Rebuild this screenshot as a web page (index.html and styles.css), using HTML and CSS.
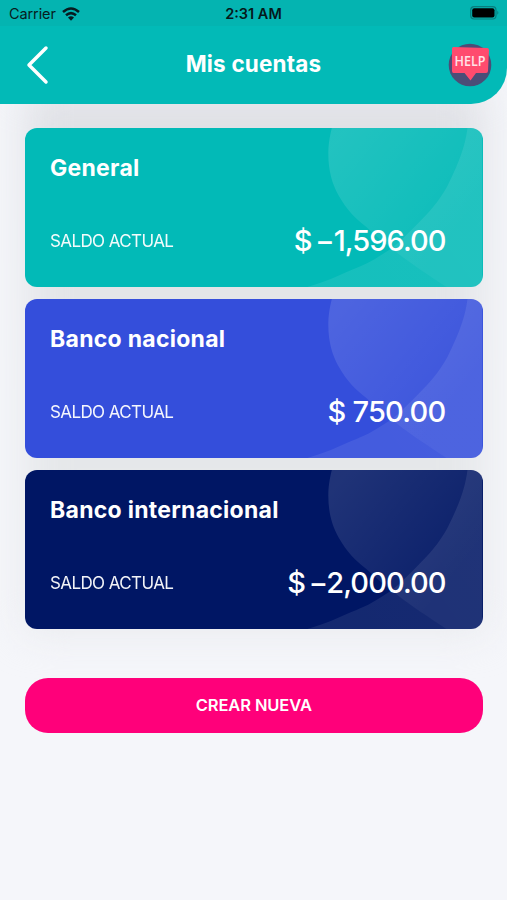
FILE: index.html
```html
<!DOCTYPE html>
<html lang="es">
<head>
<meta charset="utf-8">
<title>Mis cuentas</title>
<link rel="stylesheet" href="styles.css">
</head>
<body>
<svg class="defs" width="0" height="0" aria-hidden="true">
  <defs>
    <linearGradient id="fadeA" gradientUnits="userSpaceOnUse" x1="315" y1="10" x2="430" y2="100"><stop offset="0" stop-color="#fff" stop-opacity=".125"/><stop offset="1" stop-color="#fff" stop-opacity=".045"/></linearGradient>
    <linearGradient id="fadeB" gradientUnits="userSpaceOnUse" x1="340" y1="158" x2="450" y2="80"><stop offset="0" stop-color="#fff" stop-opacity=".08"/><stop offset="1" stop-color="#fff" stop-opacity=".085"/></linearGradient>
    <symbol id="waves" viewBox="0 0 457 159" preserveAspectRatio="none">
      <path fill="url(#fadeA)" d="M306.500 0C304 10 303 17 303 26C303 43 307 56 313 67C322 83 330 90 341 99C352 109 361 117 372 125C386 136 403 147 421 159H457V0Z"/>
      <path fill="url(#fadeB)" d="M442 0C440 16 435 32 422 58C413 74 404 84 392 96C380 108 371 118 359 125C347 133 339 137 326 142C312 148 300 154 282 159H457V0Z"/>
    </symbol>
  </defs>
</svg>
<header class="header">
  <div class="status">
    <div class="carrier"><span class="carrier-name">Carrier</span>
      <svg class="wifi" viewBox="0 0 18 14"><g fill="none" stroke="#071c20" stroke-width="2.500"><path d="M1 5Q9-2 17 5"/><path d="M4 8.300Q9 4 14 8.300"/></g><path fill="#071c20" d="M6 10.500Q9 8 12 10.500L9 13.800Z"/></svg>
    </div>
    <span class="time">2:31 AM</span>
    <svg class="battery" viewBox="0 0 30 14"><rect x=".7" y=".7" width="25.300" height="12.300" rx="3.500" fill="none" stroke="#087e7e" stroke-width="1.200"/><rect x="2.200" y="2.200" width="22.300" height="9.300" rx="2" fill="#000"/><path d="M27.300 4.800Q29.500 6.800 27.300 8.800Z" fill="#087e7e"/></svg>
  </div>
  <div class="bar">
    <svg class="back" viewBox="0 0 24 40"><path d="M20 3L3 20L20 37" fill="none" stroke="#fff" stroke-width="3.500" stroke-linecap="round" stroke-linejoin="round"/></svg>
    <h1 class="title">Mis cuentas</h1>
    <svg class="help" viewBox="0 0 44 44"><circle cx="22" cy="22" r="21.300" fill="#4b4d77"/><path d="M4 5.500Q4 4 5.500 4L39 5Q41 5 41 7L40 28Q40 30 38 30H28L22.500 37.500L16.500 30H5.500Q4 30 4 28Z" fill="#ff4b6e"/><text x="22" y="22.500" text-anchor="middle" textLength="31" lengthAdjust="spacingAndGlyphs" class="help-text">HELP</text></svg>
  </div>
</header>
<main class="main">
  <section class="accounts">
    <article class="card teal"><svg class="waves"><use href="#waves"/></svg><h2 class="name">General</h2><div class="row"><span class="label">SALDO ACTUAL</span><span class="amount negative">$ −1,596.00</span></div></article>
    <article class="card blue"><svg class="waves"><use href="#waves"/></svg><h2 class="name">Banco nacional</h2><div class="row"><span class="label">SALDO ACTUAL</span><span class="amount">$ 750.00</span></div></article>
    <article class="card navy"><svg class="waves"><use href="#waves"/></svg><h2 class="name">Banco internacional</h2><div class="row"><span class="label">SALDO ACTUAL</span><span class="amount negative">$ −2,000.00</span></div></article>
  </section>
  <button class="create">CREAR NUEVA</button>
</main>
</body>
</html>
```
FILE: styles.css
```css
* { box-sizing: border-box; }
body { margin: 0; min-height: 900px; background: #f5f6fa; font-family: Inter, "Open Sans", sans-serif; color: #fff; overflow: hidden; }
.defs { position: absolute; }
.header { position: relative; z-index: 1; height: 103.500px; background: #02bab7; border-bottom-right-radius: 36px; }
.status { display: grid; grid-template-columns: 1fr auto 1fr; align-items: center; height: 26px; padding: 0 7px 0 9px; background: #04b4b1; color: #071c20; font-size: 14.500px; }
.carrier { display: flex; align-items: center; gap: 6px; padding-top: 1px; }
.carrier-name { letter-spacing: -.1px; }
.wifi { width: 18px; height: 14px; }
.time { font-weight: 600; padding: 1px 2px 0 0; color: #05191b; }
.battery { width: 30px; height: 14px; justify-self: end; }
.bar { display: grid; grid-template-columns: 44px 1fr 44px; align-items: center; height: 77px; padding: 0 15px 0 26px; }
.back { width: 24px; height: 40px; }
.title { margin: 0 11px 1px 0; text-align: center; font-size: 22.500px; font-weight: 700; line-height: 28px; letter-spacing: .18px; }
.help { width: 44px; height: 44px; justify-self: end; }
.help-text { font: 600 14.500px "Open Sans", sans-serif; fill: #ffe3e8; }
.main { padding: 24.500px 24.500px 0 25px; }
.accounts { position: relative; display: flex; flex-direction: column; gap: 12px; }
.accounts::before { content: ""; position: absolute; inset: -40px -2px -2px 0; background: linear-gradient(#dfe0e5, #e4e6e9 45%, #e6e8ea 75%, #e8e9ed); filter: blur(20px); }
.card { position: relative; height: 159px; padding: 24px 37px 0 25px; border-radius: 12px; overflow: hidden; }
.teal { background: #02bab7; }
.blue { background: #344edb; }
.navy { background: #001664; }
.waves { position: absolute; inset: 0; width: 100%; height: 100%; }
.name { position: relative; margin: 0; font-size: 23px; font-weight: 700; line-height: 32px; letter-spacing: .28px; white-space: nowrap; }
.row { position: relative; display: flex; justify-content: space-between; align-items: center; height: 42px; margin-top: 36px; }
.label { font-size: 17px; letter-spacing: -.6px; opacity: .95; }
.amount { margin-top: -2px; font-size: 29px; font-weight: 500; letter-spacing: -.75px; white-space: nowrap; }
.negative { letter-spacing: -.95px; word-spacing: -3px; }
.create { display: block; width: 100%; height: 55px; margin-top: 49px; padding: 0 0 2px; border: 0; border-radius: 23px; background: #ff007a; color: #fff; font: 600 16.500px Inter, sans-serif; letter-spacing: -.1px; }
```
